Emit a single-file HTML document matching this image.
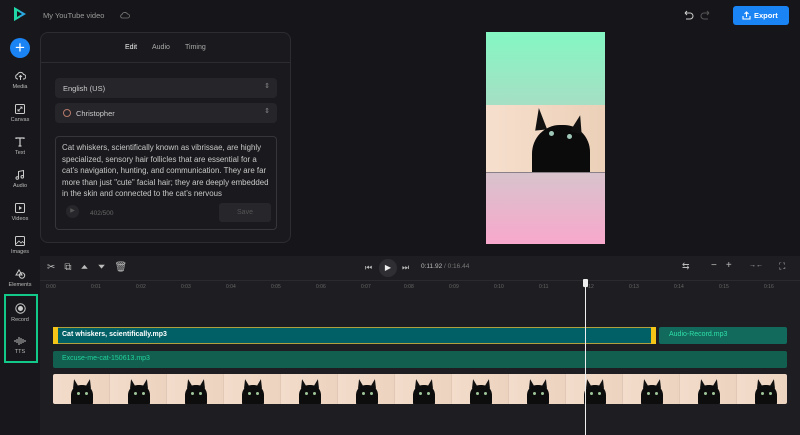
<!DOCTYPE html>
<html><head><meta charset="utf-8"><style>
*{box-sizing:border-box;margin:0;padding:0}
body{width:800px;height:435px;background:#16161a;font-family:"Liberation Sans",sans-serif;position:relative;overflow:hidden;color:#ddd}
.abs{position:absolute}
.side{left:0;top:0;width:40px;height:435px;background:#18181c}
.nav{position:absolute;left:0;width:40px;text-align:center;font-size:5.5px;color:#bbb}
.nav svg{display:block;margin:0 auto 3px}
.panel{left:40px;top:32px;width:251px;height:211px;border:1px solid #2c2c31;border-radius:8px;background:#1a1a1e}
.sel{position:absolute;left:14px;width:222px;height:20px;background:#25252a;border-radius:4px;font-size:7.5px;color:#ccc;padding:6px 8px}
.tl{left:40px;top:256px;width:760px;height:179px;background:#1e1e22}
.tick{position:absolute;top:284px;font-size:5px;color:#666}
.cat{position:absolute;top:0;width:57px;height:30px;background:linear-gradient(90deg,#f3dccb,#ecd3bf);overflow:hidden;border-right:1px solid #e2c9b5}
.cat .h{position:absolute;left:18px;top:11px;width:22px;height:22px;background:#0d0d0d;border-radius:45% 45% 20% 20%}
.cat .e1,.cat .e2{position:absolute;top:5px;width:0;height:0;border-left:3px solid transparent;border-right:3px solid transparent;border-bottom:9px solid #111}
.cat .e1{left:19px;transform:rotate(-12deg)}.cat .e2{left:33px;transform:rotate(12deg)}
.cat i{position:absolute;top:18px;width:3px;height:3px;border-radius:50%;background:#9fc59a}
</style></head><body>
<div class="abs side"></div>
<svg class="abs" style="left:13px;top:6px" width="14" height="16" viewBox="0 0 14 16"><path d="M1 1 L13 8 L1 15 Z" fill="#2aa9e0"/><path d="M1 1 L7 4.5 L7 11.5 L1 15Z" fill="#1fd8a6"/><path d="M4 5 L9 8 L4 11Z" fill="#16161a"/></svg>
<div class="abs" style="left:43px;top:11px;font-size:7.5px;color:#999">My YouTube video</div>
<svg class="abs" style="left:119px;top:11px" width="11" height="8" viewBox="0 0 11 8"><path d="M3 7h5.5a2 2 0 0 0 0-4 3 3 0 0 0-5.5 0.5A1.8 1.8 0 0 0 3 7z" fill="none" stroke="#777" stroke-width=".8"/></svg>
<div class="abs" style="left:10px;top:38px;width:20px;height:20px;border-radius:50%;background:#1a84f5;color:#fff;font-size:17px;line-height:19px;text-align:center">+</div>
<div class="nav" style="top:71px"><svg width="11" height="10" viewBox="0 0 11 10"><path d="M3 8H2.5a2.3 2.3 0 0 1 0-4.5 3.2 3.2 0 0 1 6 0 2.2 2.2 0 0 1 0 4.5H8M5.5 9V4.5M4 6l1.5-1.5L7 6" fill="none" stroke="#ccc" stroke-width="1"/></svg>Media</div>
<div class="nav" style="top:104px"><svg width="10" height="10" viewBox="0 0 10 10"><rect x=".5" y=".5" width="9" height="9" rx="1" fill="none" stroke="#ccc"/><path d="M3 7l4-4M5 3h2v2M3 5v2h2" fill="none" stroke="#ccc" stroke-width=".8"/></svg>Canvas</div>
<div class="nav" style="top:137px"><svg width="10" height="10" viewBox="0 0 10 10"><path d="M1 2V1h8v1M5 1v8M3.5 9h3" fill="none" stroke="#ccc" stroke-width="1.2"/></svg>Text</div>
<div class="nav" style="top:170px"><svg width="10" height="10" viewBox="0 0 10 10"><path d="M3.5 8V1.5l5-1v6" fill="none" stroke="#ccc"/><circle cx="2.3" cy="8" r="1.3" fill="none" stroke="#ccc"/><circle cx="7.3" cy="6.8" r="1.3" fill="none" stroke="#ccc"/></svg>Audio</div>
<div class="nav" style="top:203px"><svg width="10" height="10" viewBox="0 0 10 10"><rect x=".5" y=".5" width="9" height="9" rx="1" fill="none" stroke="#ccc"/><path d="M4 3l3 2-3 2z" fill="#ccc"/></svg>Videos</div>
<div class="nav" style="top:236px"><svg width="10" height="10" viewBox="0 0 10 10"><rect x=".5" y=".5" width="9" height="9" rx="1" fill="none" stroke="#ccc"/><path d="M1 8l3-3 2 2 1.5-1.5L9 7" fill="none" stroke="#ccc" stroke-width=".8"/></svg>Images</div>
<div class="nav" style="top:269px"><svg width="11" height="10" viewBox="0 0 11 10"><path d="M4 1L1 6h6z" fill="none" stroke="#ccc"/><circle cx="7" cy="6.5" r="2.7" fill="none" stroke="#ccc"/></svg>Elements</div>
<div class="abs" style="left:4px;top:294px;width:34px;height:69px;border:2px solid #13c98a"></div>
<div class="nav" style="top:303px"><svg width="11" height="11" viewBox="0 0 11 11"><circle cx="5.5" cy="5.5" r="4.7" fill="none" stroke="#ccc"/><circle cx="5.5" cy="5.5" r="2.5" fill="#ccc"/></svg>Record</div>
<div class="nav" style="top:336px"><svg width="12" height="10" viewBox="0 0 12 10"><path d="M1 4v2M3 3v4M5 1v8M7 2v6M9 3v4M11 4v2" stroke="#ccc" stroke-width=".9"/></svg>TTS</div>

<div class="abs panel">
 <div style="position:absolute;left:0;right:0;top:0;height:30px;border-bottom:1px solid #2c2c31;font-size:7px;color:#aaa">
  <span style="position:absolute;left:84px;top:11px;color:#eee">Edit</span>
  <span style="position:absolute;left:111px;top:11px">Audio</span>
  <span style="position:absolute;left:144px;top:11px">Timing</span>
 </div>
 <div class="sel" style="top:45px">English (US)<span style="position:absolute;right:7px;top:4px;font-size:7px;color:#888">⇕</span></div>
 <div class="sel" style="top:70px"><span style="display:inline-block;width:8px;height:8px;border:1px solid #b87a6a;border-radius:50%;vertical-align:-1px;margin-right:5px"></span>Christopher<span style="position:absolute;right:7px;top:4px;font-size:7px;color:#888">⇕</span></div>
 <div style="position:absolute;left:14px;top:103px;width:222px;height:94px;border:1px solid #35353a;border-radius:4px;padding:5px 6px;font-size:7.9px;line-height:11.5px;color:#c8c8c8;overflow:hidden">
  <div style="height:57px;overflow:hidden;width:212px">Cat whiskers, scientifically known as vibrissae, are highly specialized, sensory hair follicles that are essential for a cat’s navigation, hunting, and communication. They are far more than just "cute" facial hair; they are deeply embedded in the skin and connected to the cat’s nervous</div>
  <div style="position:absolute;left:10px;top:68px;width:13px;height:13px;border-radius:50%;background:#26262b;font-size:6px;color:#555;text-align:center;line-height:13px">▶</div>
  <div style="position:absolute;left:34px;top:71px;font-size:6.5px;color:#666">402/500</div>
  <div style="position:absolute;left:163px;top:66px;width:52px;height:19px;background:#26262b;border-radius:3px;color:#555;font-size:7px;text-align:center;line-height:19px">Save</div>
 </div>
</div>

<svg class="abs" style="left:682px;top:10px" width="30" height="11" viewBox="0 0 30 11"><path d="M3 3h5a3 3 0 0 1 0 6H4M3 3l2-2M3 3l2 2" fill="none" stroke="#ccc" stroke-width="1"/><path d="M27 3h-5a3 3 0 0 0 0 6h4M27 3l-2-2M27 3l-2 2" fill="none" stroke="#555" stroke-width="1"/></svg>
<div class="abs" style="left:733px;top:6px;width:56px;height:19px;background:#1a84f5;border-radius:3px;color:#fff;font-size:7.5px;font-weight:bold;line-height:19px;padding-left:21px">Export</div>
<svg class="abs" style="left:742px;top:11px" width="9" height="9" viewBox="0 0 9 9"><path d="M4.5 6V1M2.5 3l2-2 2 2M1 5v3h7V5" fill="none" stroke="#fff" stroke-width="1.1"/></svg>

<div class="abs" style="left:486px;top:32px;width:119px;height:73px;background:linear-gradient(#84f7c3,#a6dfc4)"></div>
<div class="abs" style="left:486px;top:105px;width:119px;height:67px;background:linear-gradient(90deg,#f6dfcd,#ecd0b8);overflow:hidden">
 <div style="position:absolute;left:46px;top:20px;width:58px;height:60px;background:#0b0b0b;border-radius:48% 45% 10% 10%"></div>
 <div style="position:absolute;left:48px;top:3px;border-left:6px solid transparent;border-right:6px solid transparent;border-bottom:22px solid #111;transform:rotate(-6deg)"></div>
 <div style="position:absolute;left:86px;top:10px;border-left:6px solid transparent;border-right:6px solid transparent;border-bottom:18px solid #111;transform:rotate(14deg)"></div>
 <div style="position:absolute;left:63px;top:26px;width:5px;height:5px;border-radius:50%;background:#9fc8b8"></div>
 <div style="position:absolute;left:81px;top:29px;width:5px;height:5px;border-radius:50%;background:#9fc8b8"></div>
</div>
<div class="abs" style="left:486px;top:172px;width:119px;height:72px;background:linear-gradient(#d8c3cc,#f8a8cc);border-top:1px solid #8a8088"></div>

<div class="abs tl"></div>
<div class="abs" style="left:40px;top:280px;width:760px;height:1px;background:#2a2a2f"></div>
<div class="abs" style="left:47px;top:262px;font-size:10px;color:#bbb;letter-spacing:9px">✂⧉⏶⏷🗑</div>
<div class="abs" style="left:365px;top:263px;font-size:8px;color:#bbb">⏮</div>
<div class="abs" style="left:379px;top:259px;width:18px;height:18px;border-radius:50%;background:#2e2e33;color:#eee;font-size:8px;line-height:18px;text-align:center">▶</div>
<div class="abs" style="left:402px;top:263px;font-size:8px;color:#bbb">⏭</div>
<div class="abs" style="left:421px;top:263px;font-size:6.5px;color:#bbb">0:11.92 <span style="color:#777">/ 0:16.44</span></div>
<div class="abs" style="left:682px;top:261px;font-size:9px;color:#bbb">⇆</div>
<div class="abs" style="left:711px;top:260px;font-size:10px;color:#bbb;letter-spacing:9px">−+</div>
<div class="abs" style="left:749px;top:262px;font-size:7px;color:#bbb">→←</div>
<div class="abs" style="left:779px;top:261px;font-size:9px;color:#bbb">⛶</div>

<div class="tick" style="left:46px">0:00</div><div class="tick" style="left:91px">0:01</div><div class="tick" style="left:136px">0:02</div><div class="tick" style="left:181px">0:03</div><div class="tick" style="left:226px">0:04</div><div class="tick" style="left:271px">0:05</div><div class="tick" style="left:316px">0:06</div><div class="tick" style="left:361px">0:07</div><div class="tick" style="left:404px">0:08</div><div class="tick" style="left:449px">0:09</div><div class="tick" style="left:494px">0:10</div><div class="tick" style="left:539px">0:11</div><div class="tick" style="left:584px">0:12</div><div class="tick" style="left:629px">0:13</div><div class="tick" style="left:674px">0:14</div><div class="tick" style="left:719px">0:15</div><div class="tick" style="left:764px">0:16</div>

<div class="abs" style="left:53px;top:327px;width:603px;height:17px;background:#006066;border:1px solid #b0a040;border-radius:2px"></div>
<div class="abs" style="left:53px;top:327px;width:5px;height:17px;background:#f5c518"></div>
<div class="abs" style="left:651px;top:327px;width:5px;height:17px;background:#f5c518"></div>
<div class="abs" style="left:62px;top:331px;font-size:7px;color:#fff;font-weight:bold">Cat whiskers, scientifically.mp3</div>
<div class="abs" style="left:659px;top:327px;width:128px;height:17px;background:#116a5c;border-radius:2px"></div>
<div class="abs" style="left:669px;top:331px;font-size:7px;color:#2fe0a8">Audio-Record.mp3</div>
<div class="abs" style="left:53px;top:351px;width:734px;height:17px;background:#125f50;border-radius:2px"></div>
<div class="abs" style="left:62px;top:355px;font-size:7px;color:#22d29a">Excuse-me-cat-150613.mp3</div>
<div class="abs" style="left:53px;top:374px;width:734px;height:30px;border-radius:2px;overflow:hidden">
 <div class="cat" style="left:0"><div class="e1"></div><div class="e2"></div><div class="h"></div><i style="left:24px"></i><i style="left:32px"></i></div>
 <div class="cat" style="left:57px"><div class="e1"></div><div class="e2"></div><div class="h"></div><i style="left:24px"></i><i style="left:32px"></i></div>
 <div class="cat" style="left:114px"><div class="e1"></div><div class="e2"></div><div class="h"></div><i style="left:24px"></i><i style="left:32px"></i></div>
 <div class="cat" style="left:171px"><div class="e1"></div><div class="e2"></div><div class="h"></div><i style="left:24px"></i><i style="left:32px"></i></div>
 <div class="cat" style="left:228px"><div class="e1"></div><div class="e2"></div><div class="h"></div><i style="left:24px"></i><i style="left:32px"></i></div>
 <div class="cat" style="left:285px"><div class="e1"></div><div class="e2"></div><div class="h"></div><i style="left:24px"></i><i style="left:32px"></i></div>
 <div class="cat" style="left:342px"><div class="e1"></div><div class="e2"></div><div class="h"></div><i style="left:24px"></i><i style="left:32px"></i></div>
 <div class="cat" style="left:399px"><div class="e1"></div><div class="e2"></div><div class="h"></div><i style="left:24px"></i><i style="left:32px"></i></div>
 <div class="cat" style="left:456px"><div class="e1"></div><div class="e2"></div><div class="h"></div><i style="left:24px"></i><i style="left:32px"></i></div>
 <div class="cat" style="left:513px"><div class="e1"></div><div class="e2"></div><div class="h"></div><i style="left:24px"></i><i style="left:32px"></i></div>
 <div class="cat" style="left:570px"><div class="e1"></div><div class="e2"></div><div class="h"></div><i style="left:24px"></i><i style="left:32px"></i></div>
 <div class="cat" style="left:627px"><div class="e1"></div><div class="e2"></div><div class="h"></div><i style="left:24px"></i><i style="left:32px"></i></div>
 <div class="cat" style="left:684px"><div class="e1"></div><div class="e2"></div><div class="h"></div><i style="left:24px"></i><i style="left:32px"></i></div>
</div>
<div class="abs" style="left:585px;top:282px;width:1px;height:153px;background:#eee"></div>
<div class="abs" style="left:583px;top:279px;width:5px;height:8px;background:#eee;border-radius:1px"></div>
</body></html>
